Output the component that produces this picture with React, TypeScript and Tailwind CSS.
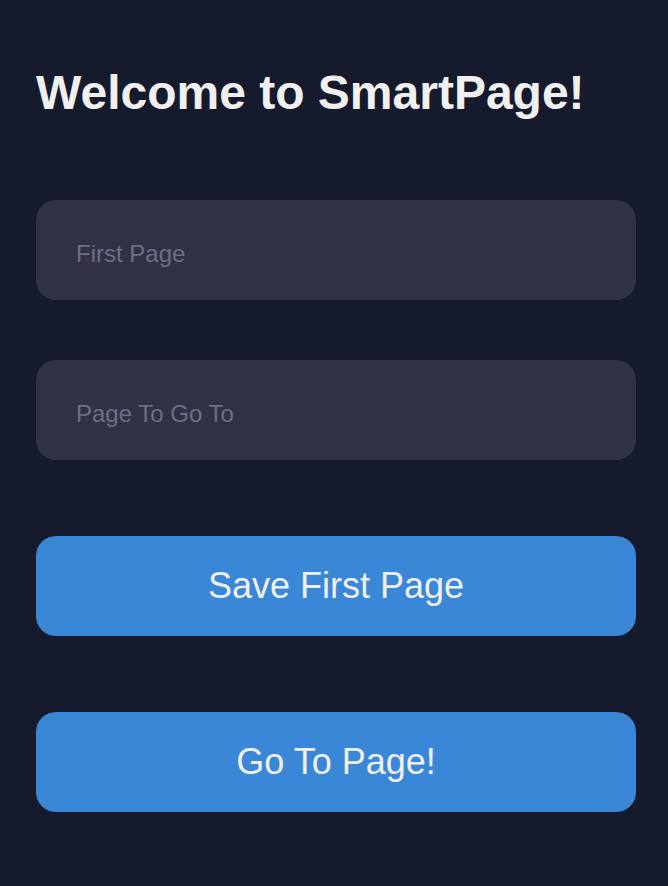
export default function App() {
  return (
    <div className="min-h-[886px] bg-[#161a2d] pl-9 pr-8 pt-[65px] font-['Liberation_Sans',Arial,sans-serif]">
      <h1 className="text-[48px] font-bold leading-[56px] text-[#f0f0f0]">Welcome to SmartPage!</h1>
      <div className="mt-[79px] flex flex-col gap-[60px]">
        <input
          type="text"
          placeholder="First Page"
          className="h-[100px] w-full rounded-[20px] bg-[#313244] px-10 pt-2 text-[24px] text-[#f0f0f0] placeholder:text-[#6c7086] outline-none"
        />
        <input
          type="text"
          placeholder="Page To Go To"
          className="h-[100px] w-full rounded-[20px] bg-[#313244] px-10 pt-2 text-[24px] text-[#f0f0f0] placeholder:text-[#6c7086] outline-none"
        />
      </div>
      <div className="mt-[76px] flex flex-col gap-[76px]">
        <button className="h-[100px] w-full rounded-[20px] bg-[#3a87d8] text-[36px] text-[#f0f0f0]">Save First Page</button>
        <button className="h-[100px] w-full rounded-[20px] bg-[#3a87d8] text-[36px] text-[#f0f0f0]">Go To Page!</button>
      </div>
    </div>
  );
}
